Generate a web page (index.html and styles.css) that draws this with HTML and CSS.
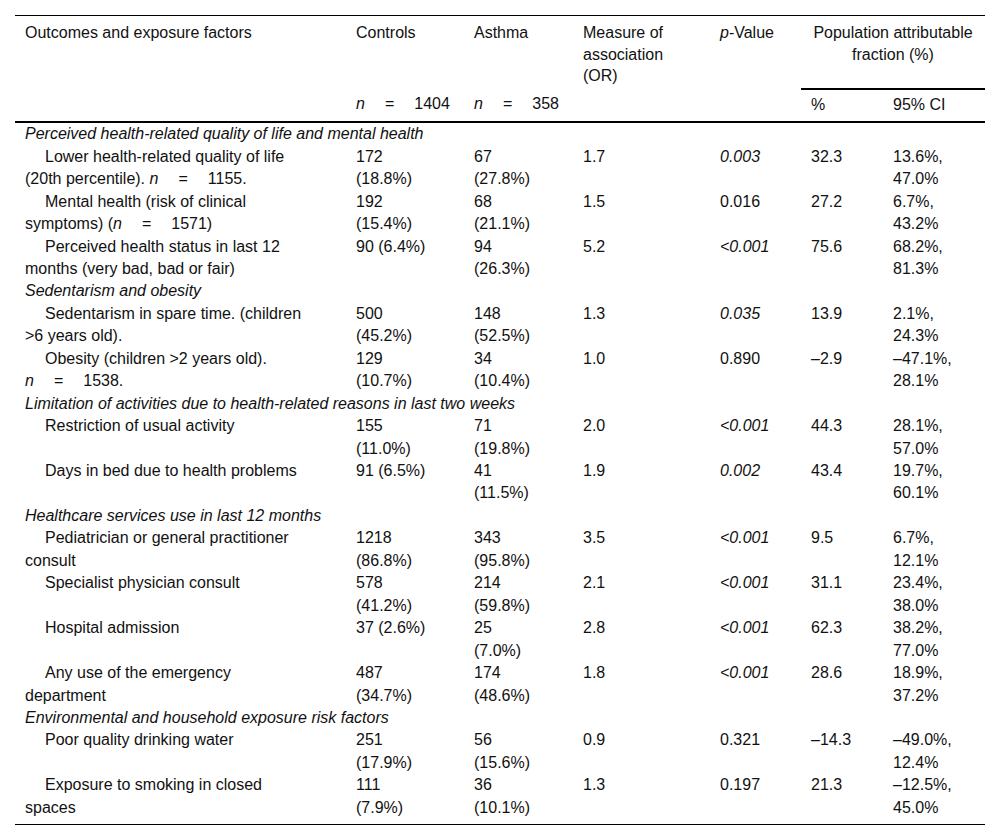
FILE: index.html
```html
<!DOCTYPE html>
<html lang="en">
<head>
<meta charset="utf-8">
<title>Outcomes and exposure factors</title>
<link rel="stylesheet" href="styles.css">
</head>
<body>
<table class="tbl">
  <colgroup>
    <col class="c1"><col class="c2"><col class="c3"><col class="c4"><col class="c5"><col class="c6"><col class="c7">
  </colgroup>
  <thead>
    <tr class="h1">
      <th class="hc1">Outcomes and exposure factors</th>
      <th class="hc2">Controls</th>
      <th class="hc3">Asthma</th>
      <th class="hc4">Measure of association (OR)</th>
      <th class="hc5"><i>p</i>-Value</th>
      <th class="hpaf" colspan="2">Population attributable fraction (%)</th>
    </tr>
    <tr class="h2">
      <th class="hc1"></th>
      <th class="hc2"><span class="math"><i>n</i><span class="eq">=</span>1404</span></th>
      <th class="hc3"><span class="math"><i>n</i><span class="eq">=</span>358</span></th>
      <th class="hc4"></th>
      <th class="hc5"></th>
      <th class="hc6">%</th>
      <th class="hc7">95% CI</th>
    </tr>
  </thead>
  <tbody>
    <tr class="grp"><td colspan="7">Perceived health-related quality of life and mental health</td></tr>
    <tr class="item"><td>Lower health-related quality of life (20th percentile). <span class="math"><i>n</i><span class="eq">=</span>1155.</span></td><td>172 (18.8%)</td><td>67 (27.8%)</td><td>1.7</td><td><i>0.003</i></td><td>32.3</td><td>13.6%, 47.0%</td></tr>
    <tr class="item"><td>Mental health (risk of clinical symptoms) <span class="math">(<i>n</i><span class="eq">=</span>1571)</span></td><td>192 (15.4%)</td><td>68 (21.1%)</td><td>1.5</td><td>0.016</td><td>27.2</td><td>6.7%, 43.2%</td></tr>
    <tr class="item"><td>Perceived health status in last 12 months (very bad, bad or fair)</td><td>90 (6.4%)</td><td>94 (26.3%)</td><td>5.2</td><td><i>&lt;0.001</i></td><td>75.6</td><td>68.2%, 81.3%</td></tr>
    <tr class="grp"><td colspan="7">Sedentarism and obesity</td></tr>
    <tr class="item"><td>Sedentarism in spare time. (children &gt;6 years old).</td><td>500 (45.2%)</td><td>148 (52.5%)</td><td>1.3</td><td><i>0.035</i></td><td>13.9</td><td>2.1%, 24.3%</td></tr>
    <tr class="item"><td>Obesity (children &gt;2 years old). <span class="math"><i>n</i><span class="eq">=</span>1538.</span></td><td>129 (10.7%)</td><td>34 (10.4%)</td><td>1.0</td><td>0.890</td><td>–2.9</td><td>–47.1%, 28.1%</td></tr>
    <tr class="grp"><td colspan="7">Limitation of activities due to health-related reasons in last two weeks</td></tr>
    <tr class="item"><td>Restriction of usual activity</td><td>155 (11.0%)</td><td>71 (19.8%)</td><td>2.0</td><td><i>&lt;0.001</i></td><td>44.3</td><td>28.1%, 57.0%</td></tr>
    <tr class="item"><td>Days in bed due to health problems</td><td>91 (6.5%)</td><td>41 (11.5%)</td><td>1.9</td><td><i>0.002</i></td><td>43.4</td><td>19.7%, 60.1%</td></tr>
    <tr class="grp"><td colspan="7">Healthcare services use in last 12 months</td></tr>
    <tr class="item"><td>Pediatrician or general practitioner consult</td><td>1218 (86.8%)</td><td>343 (95.8%)</td><td>3.5</td><td><i>&lt;0.001</i></td><td>9.5</td><td>6.7%, 12.1%</td></tr>
    <tr class="item"><td>Specialist physician consult</td><td>578 (41.2%)</td><td>214 (59.8%)</td><td>2.1</td><td><i>&lt;0.001</i></td><td>31.1</td><td>23.4%, 38.0%</td></tr>
    <tr class="item"><td>Hospital admission</td><td>37 (2.6%)</td><td>25 (7.0%)</td><td>2.8</td><td><i>&lt;0.001</i></td><td>62.3</td><td>38.2%, 77.0%</td></tr>
    <tr class="item"><td>Any use of the emergency department</td><td>487 (34.7%)</td><td>174 (48.6%)</td><td>1.8</td><td><i>&lt;0.001</i></td><td>28.6</td><td>18.9%, 37.2%</td></tr>
    <tr class="grp"><td colspan="7">Environmental and household exposure risk factors</td></tr>
    <tr class="item"><td>Poor quality drinking water</td><td>251 (17.9%)</td><td>56 (15.6%)</td><td>0.9</td><td>0.321</td><td>–14.3</td><td>–49.0%, 12.4%</td></tr>
    <tr class="item last"><td>Exposure to smoking in closed spaces</td><td>111 (7.9%)</td><td>36 (10.1%)</td><td>1.3</td><td>0.197</td><td>21.3</td><td>–12.5%, 45.0%</td></tr>
  </tbody>
</table>
</body>
</html>
```
FILE: styles.css
```css
html, body {
  margin: 0;
  padding: 0;
  background: #ffffff;
}

body {
  font-family: "Liberation Sans", Arial, sans-serif;
  font-size: 16px;
  line-height: 22.45px;
  color: #111111;
}

.tbl {
  margin: 15px 0 0 15px;
  width: 970px;
  table-layout: fixed;
  border-collapse: collapse;
  border-top: 1px solid #000;
  border-bottom: 1px solid #000;
}

.c1 { width: 331px; }
.c2 { width: 118px; }
.c3 { width: 109px; }
.c4 { width: 137px; }
.c5 { width: 91px; }
.c6 { width: 82px; }
.c7 { width: 102px; }

th {
  font-weight: normal;
  text-align: left;
  vertical-align: top;
}

td {
  vertical-align: top;
  text-align: left;
}

.h1 th {
  line-height: 21.6px;
  padding-top: 6px;
  padding-bottom: 2px;
}

.h2 th {
  padding-top: 4px;
  padding-bottom: 5px;
  border-bottom: 2px solid #000;
}

.hc1 { padding-left: 10px; padding-right: 37px; }
.hc2 { padding-left: 10px; padding-right: 34px; }
.hc3 { padding-left: 10px; padding-right: 36px; }
.hc4 { padding-left: 10px; padding-right: 32px; }
.hc5 { padding-left: 10px; padding-right: 16px; }
.hc6 { padding-left: 10px; padding-right: 16px; }
.hc7 { padding-left: 10px; padding-right: 10px; }

.h1 .hpaf {
  text-align: center;
  padding-left: 10px;
  padding-right: 10px;
  border-bottom: 2px solid #000;
}

.math {
  white-space: nowrap;
}

.eq {
  margin: 0 20px;
}

.grp td {
  font-style: italic;
  padding: 0 10px;
}

.item td {
  padding: 0 16px 0 10px;
}

.item td:nth-child(1) {
  padding-right: 37px;
  text-indent: 20px;
}

.item td:nth-child(2) { padding-right: 34px; }
.item td:nth-child(3) { padding-right: 36px; }
.item td:nth-child(4) { padding-right: 32px; }
.item td:nth-child(5) { padding-right: 16px; }
.item td:nth-child(6) { padding-right: 16px; }
.item td:nth-child(7) { padding-right: 10px; }

.last td {
  padding-bottom: 5px;
}
```
